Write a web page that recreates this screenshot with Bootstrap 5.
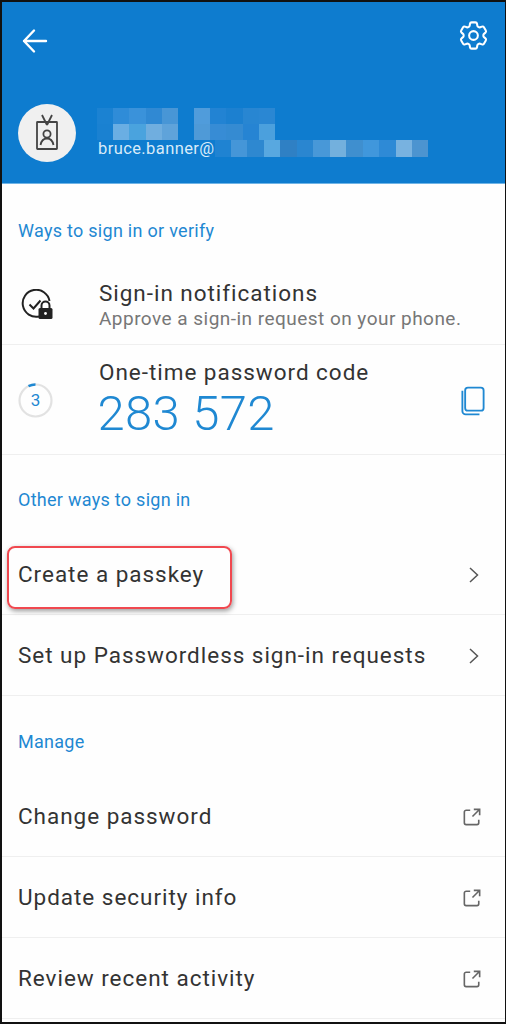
<!DOCTYPE html>
<html lang="en">
<head>
  <meta charset="UTF-8">
  <title>Authenticator account</title>
  <meta name="viewport" content="width=device-width, initial-scale=1.0">
  <link href="https://cdn.jsdelivr.net/npm/bootstrap@5.3.3/dist/css/bootstrap.min.css" rel="stylesheet" />
  <style>
    html, body { height: 100%; }
    body { margin: 0; background: #fff; font-family: Roboto, "Liberation Sans", sans-serif; color: #333; }
    .phone-frame { height: 1024px; border: solid #111; border-width: 2px 1px 2px 2px; overflow: hidden; background: #fefefe; }
    .acct-header { height: 182px; background: #0e7ccf; border-bottom: 1px solid #6fb4e6; padding: 0 16px; }
    .header-top { height: 66px; }
    .back-btn { margin-top: 25.5px; margin-left: 4px; }
    .gear-btn { margin-top: 15.5px; margin-right: -1.5px; }
    .acct-row { margin-top: 36px; }
    .acct-avatar { width: 58px; height: 58px; background: #f0f0f0; }
    .acct-text { margin-left: 22px; }
    .pix-line { height: 16px; margin-left: -1px; }
    .pix { display: block; width: 16.2px; height: 16px; }
    .pix-gap { width: 16px; }
    .mail-line { height: 17px; }
    .mail-line .pix { width: 16.46px; height: 17px; }
    .acct-mail { color: #d8ebf9; font-size: 16.5px; line-height: 16px; letter-spacing: .4px; padding-top: 1px; }
    .sect-label { color: #1f88d2; font-size: 18px; letter-spacing: .28px; padding: 0 16px; display: flex; align-items: center; }
    .sect-first { height: 81px; padding-top: 11px; }
    .sect-other { height: 79px; padding-top: 10px; }
    .sect-manage { height: 80px; padding-top: 11px; }
    .acct-list { --bs-border-color: #efefef; }
    .acct-list .list-group-item { background: transparent; border-color: #efefef; padding: 2px 16px 0; display: flex; align-items: center; color: #333; }
    .acct-list .row-nav { height: 81px; font-size: 22.5px; letter-spacing: .97px; }
    .acct-list .row-nav:last-child { height: 80px; }
    .acct-list .row-end { height: 78px; }
    .row-nav svg { margin-left: auto; }
    .row-nav .chev-icon { margin-right: 9px; }
    .row-nav .ext-icon { margin-right: 8px; }
    .acct-list .row-notif { height: 80px; }
    .acct-list .row-otp { height: 109px; }
    .lead-cell { width: 81px; flex: none; }
    .notif-icon { margin-left: 2px; }
    .row-title { font-size: 22.5px; line-height: 26px; letter-spacing: .97px; }
    .row-sub { font-size: 19px; line-height: 26px; color: #777; letter-spacing: .47px; }
    .otp-code { font-size: 49px; line-height: 56px; font-weight: 300; color: #1f88d2; letter-spacing: .3px; margin: 1px 0 0 -1.5px; }
    .timer-num { font-size: 17px; color: #1f88d2; }
    .timer-box { width: 35px; height: 35px; }
    .copy-btn { margin-left: auto; margin-right: 4px; }
    .callout { left: 5px; top: 12px; width: 225px; height: 63px; border: 2.5px solid #f0484f; border-radius: 8px; box-shadow: 1px 2px 5px rgba(0,0,0,.4); pointer-events: none; }
  </style>
</head>
<body>
  <div class="phone-frame">
    <div class="acct-header">
      <div class="header-top d-flex justify-content-between align-items-start">
        <svg class="back-btn" width="26" height="26" viewBox="0 0 26 26" fill="none" stroke="#fff" stroke-width="2.4" stroke-linecap="round" stroke-linejoin="round"><path d="M2 13h22M12 2.500 2 13l10 10.500"/></svg>
        <svg class="gear-btn" width="35" height="35" viewBox="0 0 24 24" fill="none" stroke="#fff" stroke-width="1.400" stroke-linejoin="round"><path d="M9.594 3.940c.09-.542.56-.94 1.110-.94h2.593c.55 0 1.020.398 1.110.94l.213 1.281c.063.374.313.686.645.870.074.04.147.083.22.127.325.196.72.257 1.075.124l1.217-.456a1.125 1.125 0 0 1 1.370.49l1.296 2.247a1.125 1.125 0 0 1-.26 1.431l-1.003.827c-.293.241-.438.613-.43.992a7.723 7.723 0 0 1 0 .255c-.008.378.137.75.43.991l1.004.827c.424.35.534.955.26 1.430l-1.298 2.247a1.125 1.125 0 0 1-1.369.491l-1.217-.456c-.355-.133-.75-.072-1.076.124a6.470 6.470 0 0 1-.22.128c-.331.183-.581.495-.644.869l-.213 1.281c-.09.543-.56.94-1.110.94h-2.594c-.55 0-1.019-.398-1.110-.94l-.213-1.281c-.062-.374-.312-.686-.644-.87a6.520 6.520 0 0 1-.22-.127c-.325-.196-.72-.257-1.076-.124l-1.217.456a1.125 1.125 0 0 1-1.369-.49l-1.297-2.247a1.125 1.125 0 0 1 .26-1.431l1.004-.827c.292-.24.437-.613.43-.991a6.932 6.932 0 0 1 0-.255c.007-.38-.138-.751-.43-.992l-1.004-.827a1.125 1.125 0 0 1-.26-1.430l1.297-2.247a1.125 1.125 0 0 1 1.370-.491l1.216.456c.356.133.751.072 1.076-.124.072-.044.146-.086.22-.128.332-.183.582-.495.644-.869l.214-1.280Z"/><circle cx="12" cy="12" r="3"/></svg>
      </div>
      <div class="acct-row d-flex align-items-start">
        <div class="acct-avatar rounded-circle d-flex align-items-center justify-content-center">
          <svg width="26" height="38" viewBox="0 0 26 38" fill="none" stroke="#444" stroke-width="1.800"><path d="M8 1l5 10M18 1l-5 10"/><rect x="3" y="8" width="20" height="27" rx=".5"/><circle cx="13" cy="20" r="3.600"/><path d="M6.500 31c1-5 3.500-6.500 6.500-6.500s5.500 1.500 6.500 6.500"/></svg>
        </div>
        <div class="acct-text">
          <div class="pix-line d-flex mt-1">
            <span class="pix" style="background:#1b82d2"></span><span class="pix" style="background:#2f8cd8"></span><span class="pix" style="background:#3a92da"></span><span class="pix" style="background:#3089d3"></span><span class="pix" style="background:#4896d6"></span>
            <span class="pix-gap"></span>
            <span class="pix" style="background:#509cdb"></span><span class="pix" style="background:#2283d3"></span><span class="pix" style="background:#1c80d0"></span><span class="pix" style="background:#2886d2"></span><span class="pix" style="background:#2a87d3"></span>
          </div>
          <div class="pix-line d-flex">
            <span class="pix" style="background:#1a81d1"></span><span class="pix" style="background:#6aaee3"></span><span class="pix" style="background:#4aa3de"></span><span class="pix" style="background:#70aedf"></span><span class="pix" style="background:#5fa3da"></span>
            <span class="pix-gap"></span>
            <span class="pix" style="background:#4f9ad7"></span><span class="pix" style="background:#378cd5"></span><span class="pix" style="background:#358bd2"></span><span class="pix" style="background:#2684d3"></span><span class="pix" style="background:#4ba0dd"></span>
          </div>
          <div class="mail-line d-flex align-items-start">
            <span class="acct-mail">bruce.banner@</span>
            <span class="pix" style="background:#1f83d2"></span><span class="pix" style="background:#4596d8"></span><span class="pix" style="background:#2e88d0"></span><span class="pix" style="background:#58a8e0"></span><span class="pix" style="background:#2f80c4"></span><span class="pix" style="background:#2a86d0"></span><span class="pix" style="background:#4898d8"></span><span class="pix" style="background:#73b0dd"></span><span class="pix" style="background:#3f8fcf"></span><span class="pix" style="background:#4097dc"></span><span class="pix" style="background:#2e8ad6"></span><span class="pix" style="background:#78b2e0"></span><span class="pix" style="background:#4c94d0"></span>
          </div>
        </div>
      </div>
    </div>

    <div class="sect-label sect-first">Ways to sign in or verify</div>
    <div class="list-group list-group-flush acct-list border-bottom">
      <div class="list-group-item row-notif">
        <div class="lead-cell">
          <svg class="notif-icon" width="36" height="34" viewBox="0 0 36 34" fill="none"><path d="M19 27.500A13.500 13.500 0 1 1 29.500 12" stroke="#222" stroke-width="2"/><path d="M9.500 15.500l4 4 7-8" stroke="#222" stroke-width="2"/><rect x="18.500" y="19" width="14" height="11" rx="1.500" fill="#222"/><path d="M21.500 19v-2.500a4 4 0 0 1 8 0V19" stroke="#222" stroke-width="2"/><circle cx="25.500" cy="24.500" r="1.400" fill="#fff"/></svg>
        </div>
        <div>
          <div class="row-title">Sign-in notifications</div>
          <div class="row-sub">Approve a sign-in request on your phone.</div>
        </div>
      </div>
      <div class="list-group-item row-otp">
        <div class="lead-cell">
          <div class="timer-box position-relative d-flex align-items-center justify-content-center">
            <svg class="position-absolute" width="35" height="35" viewBox="0 0 35 35" fill="none"><circle cx="17.500" cy="17.500" r="16" stroke="#e2e2e2" stroke-width="2.200"/><path d="M10.500 3.200A16 16 0 0 1 17.500 1.500" stroke="#1f88d2" stroke-width="2.500"/></svg>
            <span class="timer-num">3</span>
          </div>
        </div>
        <div>
          <div class="row-title">One-time password code</div>
          <div class="otp-code">283 572</div>
        </div>
        <svg class="copy-btn" width="24" height="30" viewBox="0 0 26 32" fill="none" stroke="#1f88d2" stroke-width="2"><rect x="4.500" y="1.500" width="20" height="25" rx="3"/><path d="M1.500 5v22a3.500 3.500 0 0 0 3.500 3.500h15"/></svg>
      </div>
    </div>

    <div class="sect-label sect-other">Other ways to sign in</div>
    <div class="list-group list-group-flush acct-list border-bottom">
      <a href="#" class="list-group-item row-nav position-relative">
        Create a passkey
        <svg class="chev-icon" width="12" height="18" viewBox="0 0 12 18" fill="none" stroke="#555" stroke-width="1.500"><path d="M2 2l7.500 7L2 16"/></svg>
        <span class="callout position-absolute"></span>
      </a>
      <a href="#" class="list-group-item row-nav">
        Set up Passwordless sign-in requests
        <svg class="chev-icon" width="12" height="18" viewBox="0 0 12 18" fill="none" stroke="#555" stroke-width="1.500"><path d="M2 2l7.500 7L2 16"/></svg>
      </a>
    </div>

    <div class="sect-label sect-manage">Manage</div>
    <div class="list-group list-group-flush acct-list border-bottom">
      <a href="#" class="list-group-item row-nav">
        Change password
        <svg class="ext-icon" width="18" height="18" viewBox="0 0 20 20" fill="none" stroke="#666" stroke-width="1.800"><path d="M8 2.500H3.500a2 2 0 0 0-2 2v12a2 2 0 0 0 2 2h12a2 2 0 0 0 2-2V13M12 1.500h6.500V8M18 2l-7.500 7.500"/></svg>
      </a>
      <a href="#" class="list-group-item row-nav">
        Update security info
        <svg class="ext-icon" width="18" height="18" viewBox="0 0 20 20" fill="none" stroke="#666" stroke-width="1.800"><path d="M8 2.500H3.500a2 2 0 0 0-2 2v12a2 2 0 0 0 2 2h12a2 2 0 0 0 2-2V13M12 1.500h6.500V8M18 2l-7.500 7.500"/></svg>
      </a>
      <a href="#" class="list-group-item row-nav row-end">
        Review recent activity
        <svg class="ext-icon" width="18" height="18" viewBox="0 0 20 20" fill="none" stroke="#666" stroke-width="1.800"><path d="M8 2.500H3.500a2 2 0 0 0-2 2v12a2 2 0 0 0 2 2h12a2 2 0 0 0 2-2V13M12 1.500h6.500V8M18 2l-7.500 7.500"/></svg>
      </a>
    </div>
  </div>
  <script src="https://cdn.jsdelivr.net/npm/bootstrap@5.3.3/dist/js/bootstrap.bundle.min.js"></script>
</body>
</html>
